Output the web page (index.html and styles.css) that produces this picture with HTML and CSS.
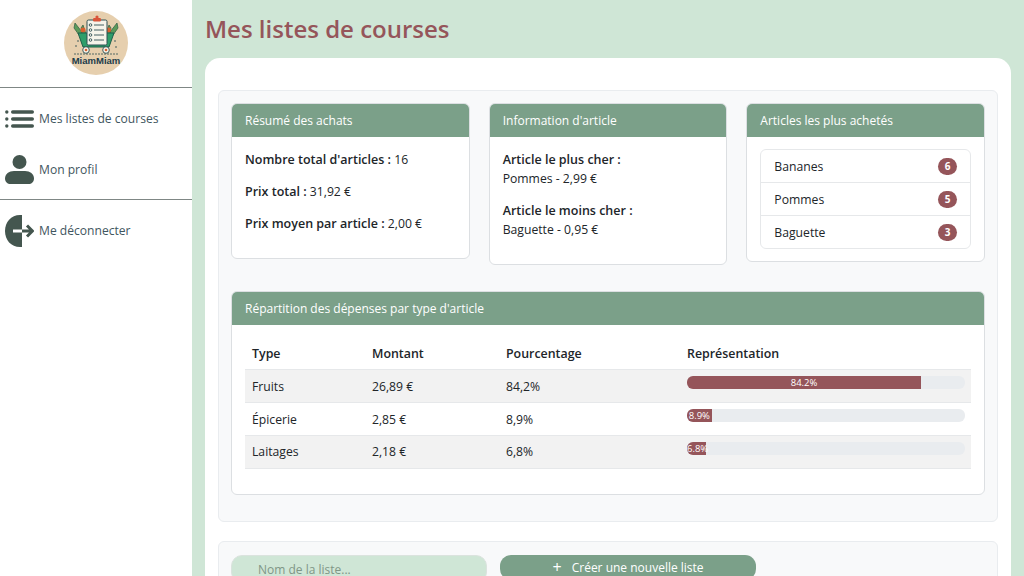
FILE: index.html
```html
<!DOCTYPE html>
<html lang="fr">
<head>
<meta charset="utf-8">
<title>Mes listes de courses</title>
<link rel="stylesheet" href="styles.css">
</head>
<body>
<div class="app">
  <aside class="sidebar">
    <div class="logo-wrap">
      <svg class="logo" viewBox="0 0 64 64" width="64" height="64" role="img" aria-label="MiamMiam">
        <circle cx="32" cy="32" r="32" fill="#e6cfae"/>
        <path d="M11 12l7 9-3 3-5-7zM19 14l3 9-3 2-2-8zM53 12l-7 9 3 3 5-7zM45 14l-3 9 3 2 2-8z" fill="#5c9a5a" stroke="#2d5c44" stroke-width=".7"/>
        <circle cx="19" cy="19" r="2.500" fill="#d9602f"/>
        <circle cx="44.500" cy="19" r="2.500" fill="#d9602f"/>
        <path d="M14 22h36l-5 14H19z" fill="#2f9e6a" stroke="#1f5f4a" stroke-width="1"/>
        <rect x="23" y="9" width="20" height="25" rx="1.500" fill="#f6f4ea" stroke="#2f4f52" stroke-width="1"/>
        <rect x="29" y="7" width="8" height="3.500" rx="1.200" fill="#d9553a"/>
        <circle cx="33" cy="6" r="1.600" fill="#d9553a"/>
        <g fill="none" stroke="#2f4f52" stroke-width=".9">
          <circle cx="26.500" cy="14" r="1.300"/><circle cx="26.500" cy="19" r="1.300"/><circle cx="26.500" cy="24" r="1.300"/><circle cx="26.500" cy="29" r="1.300"/>
          <path d="M30 14h10M30 19h10M30 24h10M30 29h10"/>
        </g>
        <g fill="#2f4f52"><circle cx="14" cy="30" r=".8"/><circle cx="12" cy="35" r=".8"/><circle cx="51" cy="30" r=".8"/><circle cx="52" cy="36" r=".8"/></g>
        <circle cx="22" cy="39" r="3.300" fill="#f6f4ea" stroke="#2f4f52" stroke-width=".9"/>
        <circle cx="22" cy="39" r="1.300" fill="#d9602f"/>
        <circle cx="42" cy="39" r="3.300" fill="#f6f4ea" stroke="#2f4f52" stroke-width=".9"/>
        <circle cx="42" cy="39" r="1.300" fill="#d9602f"/>
        <path d="M10 43h44" stroke="#2f4f52" stroke-dasharray="2 1" stroke-width=".8"/>
        <text x="32" y="52.500" class="logo-text" text-anchor="middle">MiamMiam</text>
      </svg>
    </div>
    <nav class="nav nav-main">
      <a class="nav-link">
        <svg class="nav-icon" viewBox="0 0 29 32"><g fill="#44564f"><circle cx="1.800" cy="9" r="1.700"/><circle cx="1.800" cy="16" r="1.700"/><circle cx="1.800" cy="23" r="1.700"/><rect x="6" y="7.300" width="23" height="3.400" rx="1.700"/><rect x="6" y="14.300" width="23" height="3.400" rx="1.700"/><rect x="6" y="21.300" width="23" height="3.400" rx="1.700"/></g></svg>
        <span>Mes listes de courses</span>
      </a>
      <a class="nav-link">
        <svg class="nav-icon" viewBox="0 0 29 32"><g fill="#44564f"><circle cx="14.500" cy="8" r="7"/><path d="M9 17h11c5 0 9 3 9 7.500 0 3.500-2.500 5.500-5.500 5.500H5.500C2.500 30 0 28 0 24.500 0 20 4 17 9 17z"/></g></svg>
        <span>Mon profil</span>
      </a>
    </nav>
    <nav class="nav nav-bottom">
      <a class="nav-link">
        <svg class="nav-icon" viewBox="0 0 29 32"><path d="M15 0h2v32h-2C6 32 0 25 0 16S6 0 15 0z" fill="#44564f"/><path d="M8 16h9" stroke="#fff" stroke-width="3"/><path d="M17 16h10M22 10.500l5.500 5.500-5.500 5.500" fill="none" stroke="#44564f" stroke-width="3"/></svg>
        <span>Me déconnecter</span>
      </a>
    </nav>
  </aside>
  <main class="main">
    <h1 class="title">Mes listes de courses</h1>
    <div class="panel">
      <section class="section stats">
        <div class="cards">
          <div class="card">
            <div class="card-head">Résumé des achats</div>
            <div class="card-body text-body">
              <p class="stat"><b>Nombre total d'articles :</b> 16</p>
              <p class="stat"><b>Prix total :</b> 31,92 €</p>
              <p class="stat"><b>Prix moyen par article :</b> 2,00 €</p>
            </div>
          </div>
          <div class="card">
            <div class="card-head">Information d'article</div>
            <div class="card-body text-body">
              <p class="stat"><b>Article le plus cher :</b><br>Pommes - 2,99 €</p>
              <p class="stat"><b>Article le moins cher :</b><br>Baguette - 0,95 €</p>
            </div>
          </div>
          <div class="card">
            <div class="card-head">Articles les plus achetés</div>
            <div class="card-body list-body">
              <ul class="top-list">
                <li><span>Bananes</span><span class="badge">6</span></li>
                <li><span>Pommes</span><span class="badge">5</span></li>
                <li><span>Baguette</span><span class="badge">3</span></li>
              </ul>
            </div>
          </div>
        </div>
        <div class="card wide">
          <div class="card-head">Répartition des dépenses par type d'article</div>
          <div class="card-body table-body">
            <table class="table">
              <thead><tr><th class="c1">Type</th><th class="c2">Montant</th><th class="c3">Pourcentage</th><th>Représentation</th></tr></thead>
              <tbody>
                <tr><td>Fruits</td><td>26,89 €</td><td>84,2%</td><td class="bar-cell"><div class="bar"><div class="fill" style="width:84.2%">84.2%</div></div></td></tr>
                <tr><td>Épicerie</td><td>2,85 €</td><td>8,9%</td><td class="bar-cell"><div class="bar"><div class="fill" style="width:8.9%">8.9%</div></div></td></tr>
                <tr><td>Laitages</td><td>2,18 €</td><td>6,8%</td><td class="bar-cell"><div class="bar"><div class="fill" style="width:6.8%">6.8%</div></div></td></tr>
              </tbody>
            </table>
          </div>
        </div>
      </section>
      <section class="section create">
        <input class="name-input" type="text" placeholder="Nom de la liste...">
        <button class="create-btn"><span class="plus">+</span> Créer une nouvelle liste</button>
      </section>
    </div>
  </main>
</div>
</body>
</html>
```
FILE: styles.css
```css
* { box-sizing: border-box; }
html, body { margin: 0; height: 576px; overflow: hidden; }
body { font-family: "Open Sans", "Noto Sans", sans-serif; font-size: 12.2px; color: #212529; background: #cfe6d6; }
.app { display: flex; height: 576px; }
.sidebar { width: 192px; flex: none; background: #fff; }
.logo-wrap { height: 88px; border-bottom: 1px solid #7f8785; padding-top: 11px; display: flex; justify-content: center; }
.logo-text { font-family: "Liberation Sans", sans-serif; font-weight: 700; font-size: 9.5px; fill: #1d3c4a; }
.nav { display: flex; flex-direction: column; }
.nav-main { padding-top: 5px; border-bottom: 1px solid #7f8785; height: 112px; }
.nav-bottom { padding-top: 5px; }
.nav-link { display: flex; align-items: center; gap: 5px; height: 51px; padding-left: 5px; color: #3f5660; font-size: 12.1px; }
.nav-icon { width: 29px; height: 32px; flex: none; }
.main { flex: 1; padding: 14px 13px 0; min-width: 0; }
.title { margin: 0 0 13.5px; height: 30px; line-height: 30px; font-size: 24px; font-weight: 600; color: #95555a; }
.panel { background: #fff; border-radius: 15px 15px 0 0; padding: 32px 13px 13px; height: 600px; }
.section { background: #f8f9fa; border: 1px solid #e9ecef; border-radius: 6px; padding: 12.5px 12px; }
.stats { height: 432px; margin-bottom: 19.5px; }
.cards { display: flex; gap: 19px; align-items: flex-start; margin-bottom: 26px; }
.cards > .card { flex: 1; }
.card { background: #fff; border: 1px solid #dcdfe2; border-radius: 6px; overflow: hidden; }
.card-head { height: 32.8px; line-height: 33px; background: #7ba089; color: #fff; padding-left: 13px; font-size: 12px; }
.card-body { padding: 12.2px 13px 13px; }
.text-body { padding: 13.700px 13px 0; }
.list-body { padding-bottom: 12px; }
.card-body b { font-weight: 600; font-size: 12.5px; color: #212529; }
.stat { margin: 0 0 13px; line-height: 19px; }
.stat:last-child { margin-bottom: 24.5px; }
.top-list { list-style: none; margin: 0; padding: 0; border: 1px solid #e6e8ea; border-radius: 6px; }
.top-list li { height: 33px; display: flex; justify-content: space-between; align-items: center; padding: 1px 13px 0; border-top: 1px solid #e6e8ea; }
.top-list li:first-child { border-top: 0; height: 32px; }
.badge { width: 19px; height: 17px; border-radius: 9px; background: #95555a; color: #fff; font-size: 10px; font-weight: 700; display: flex; align-items: center; justify-content: center; }
.wide { height: 204px; }
.table { width: 100%; border-collapse: collapse; table-layout: fixed; }
.table th { height: 33px; text-align: left; padding: 0 6px; font-weight: 600; font-size: 12.4px; color: #212529; }
.c1 { width: 121px; }
.c2 { width: 134px; }
.c3 { width: 181px; }
.table td { height: 32.8px; padding: 0 6px; border-top: 1px solid #e6e8ea; border-bottom: 1px solid #e6e8ea; }
.table th:first-child, .table td:first-child { padding-left: 7px; }
.table td.bar-cell { vertical-align: top; padding-top: 6px; }
.table tbody tr:nth-child(odd) { background: #f2f2f2; }
.bar { height: 13px; background: #e9ecef; border-radius: 6px; overflow: hidden; display: flex; }
.fill { background: #95555a; color: #fff; font-size: 9.5px; line-height: 13px; text-align: center; white-space: nowrap; }
.create { display: flex; gap: 13px; height: 100px; padding-top: 13px; }
.name-input { width: 256px; height: 28px; background: #cfe6d6; border: 1px solid #dbe3de; border-radius: 11px; padding: 0 26px; font-family: inherit; font-size: 12px; color: #5f7a6b; }
.name-input::placeholder { color: #7f9686; opacity: 1; }
.create-btn { width: 256px; height: 25px; background: #7ba089; border: 0; border-radius: 11px; color: #fff; font-family: inherit; font-size: 12px; padding: 0; line-height: 20px; }
.plus { font-size: 16px; line-height: 1; margin-right: 7px; vertical-align: -1px; }
```
